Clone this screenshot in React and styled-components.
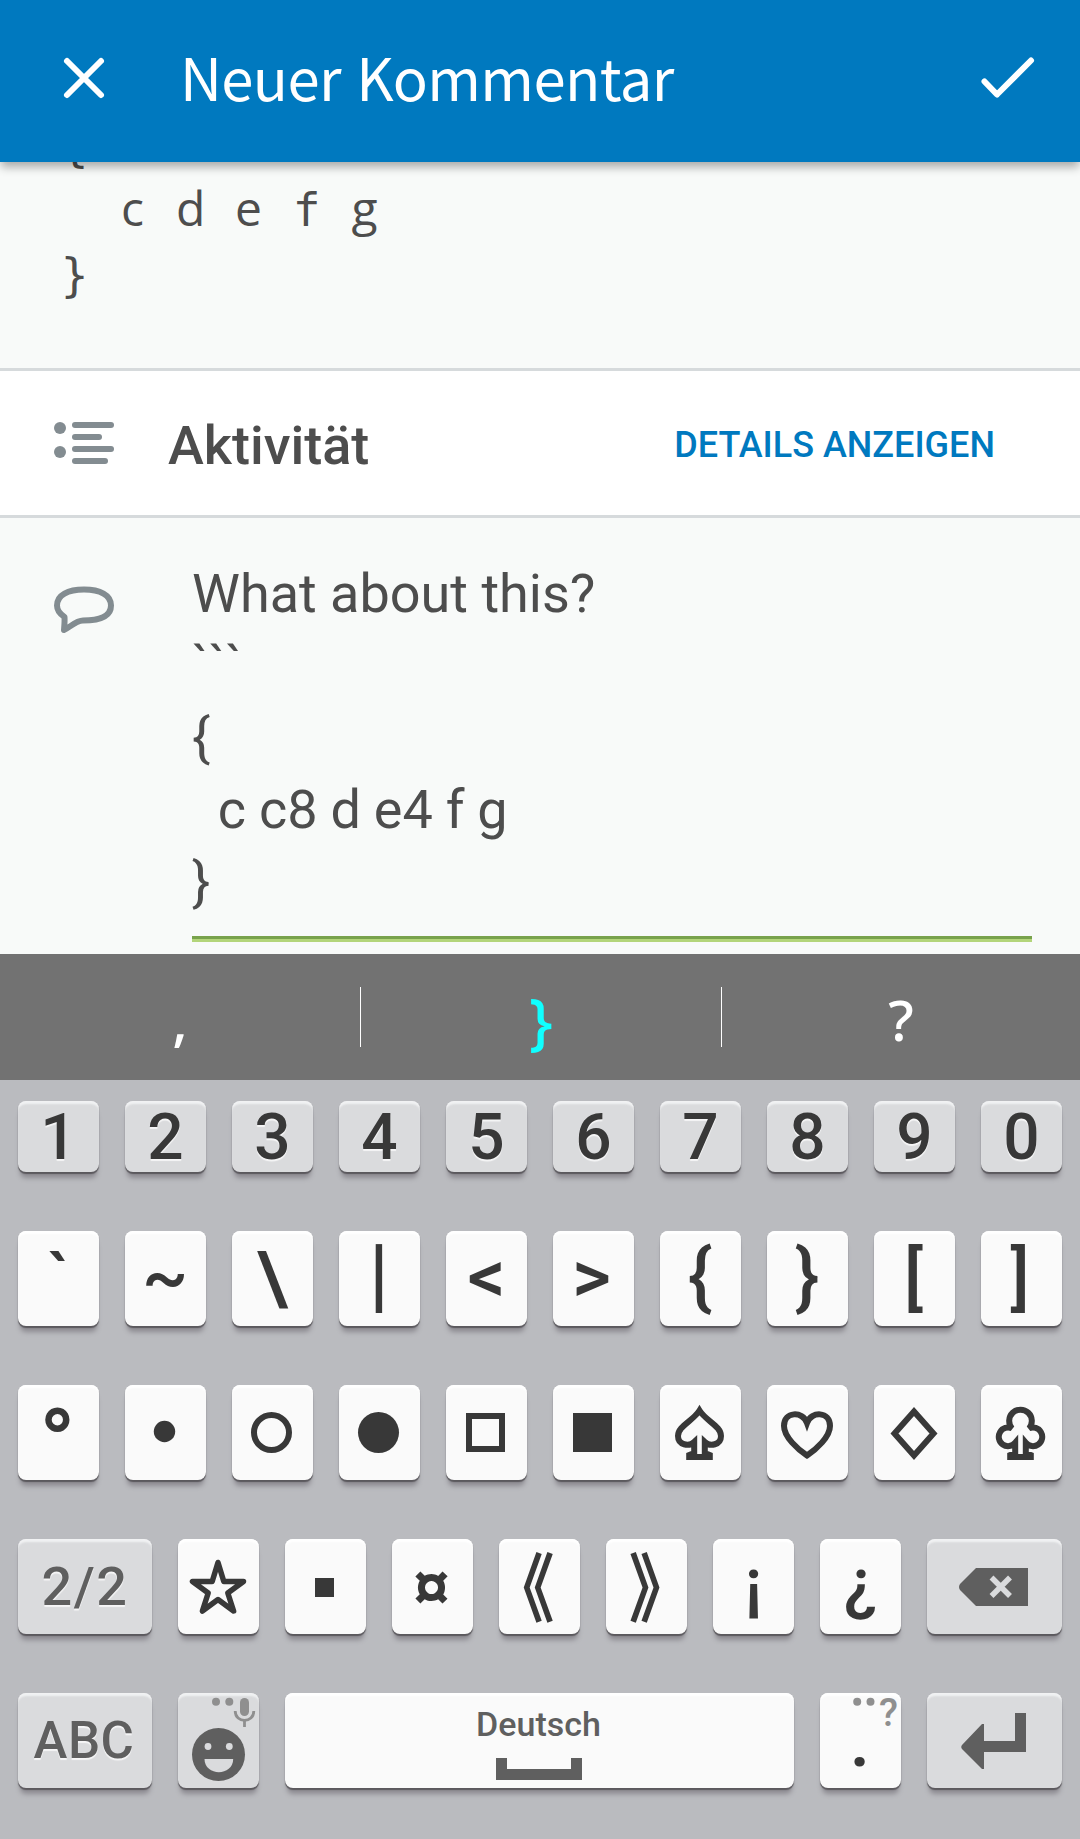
import React from 'react';
import styled, { createGlobalStyle, css } from 'styled-components';

const GlobalStyle = createGlobalStyle`
  * { box-sizing: border-box; }
  html, body { margin: 0; padding: 0; background: #babbbf; }
`;

const INK = '#383838';
const MUTED = '#5f5f5f';
const HINT = '#8f8f8f';

const Screen = styled.div`
  width: 1080px;
  height: 1839px;
  display: flex;
  flex-direction: column;
  overflow: hidden;
  background: #f8faf9;
  font-family: Roboto, "Liberation Sans", sans-serif;
  color: #4d4d4d;
`;

const Header = styled.header`
  flex: none;
  height: 162px;
  display: flex;
  align-items: center;
  padding: 0 42px 6px 60px;
  background: #0079bf;
  color: #fff;
  z-index: 1;
  box-shadow: 0 6px 9px -1px rgba(0, 0, 0, 0.32);
`;

const Title = styled.h1`
  flex: 1;
  margin: -5px 0 0 72px;
  font: 400 58px/80px "Noto Sans CJK JP", "Noto Sans", sans-serif;
  letter-spacing: -0.6px;
  word-spacing: 3px;
  white-space: nowrap;
`;

const CodeBlock = styled.section`
  flex: none;
  height: 206px;
  padding-left: 60px;
  overflow: hidden;
`;

const CodeLines = styled.div`
  margin-top: -52px;
`;

const CodeLine = styled.div`
  display: grid;
  grid-template-columns: repeat(12, 29px);
  height: 65px;
  font: 500 48px/65px "Open Sans", "Noto Sans", sans-serif;
  text-align: center;
`;

const MonoChar = styled.span`
  ${(p) => p.$mono && css`font: 400 46px/70px "DejaVu Sans Mono", monospace;`}
`;

const ActivityBar = styled.section`
  flex: none;
  height: 150px;
  display: flex;
  align-items: center;
  padding: 0 85px 0 54px;
  background: #fff;
  border: solid #d6dadc;
  border-width: 3px 0;
`;

const ActivityTitle = styled.h2`
  flex: 1;
  margin: 0 0 -5px 54px;
  font-size: 54px;
  line-height: 64px;
  font-weight: 500;
`;

const DetailsButton = styled.button`
  margin-top: 4px;
  padding: 0;
  border: 0;
  background: none;
  color: #0079bf;
  font: 500 36px/42px Roboto, sans-serif;
`;

const CommentSection = styled.section`
  flex: none;
  height: 436px;
  display: flex;
  align-items: flex-start;
  padding: 40px 48px 0 54px;
`;

const CommentGlyph = styled.div`
  flex: none;
  width: 138px;
  padding-top: 28px;
`;

const Editor = styled.div`
  flex: 1;
  height: 384px;
  border-bottom: 3px solid #b3d57a;
  box-shadow: inset 0 -3px 0 #78a24c;
  font-size: 54px;
  line-height: 72px;
`;

const EditorLine = styled.div`
  height: 72px;
  white-space: pre;
  word-spacing: ${(p) => (p.$tight ? -0.5 : 0)}px;
`;

const Suggestions = styled.div`
  flex: none;
  height: 126px;
  display: grid;
  grid-template-columns: 360px 361px 359px;
  align-items: center;
  background: #727272;
`;

const Suggestion = styled.div`
  height: 60px;
  display: flex;
  justify-content: center;
  align-items: center;
  font: 500 ${(p) => p.$size || 57}px/60px "Noto Sans", sans-serif;
  color: ${(p) => (p.$active ? '#10ffff' : '#fff')};
  border-left: ${(p) => (p.$first ? 0 : 1)}px solid #fff;
`;

const Word = styled.span`
  margin-top: 3px;
`;

const Keyboard = styled.div`
  flex: 1;
  display: flex;
  flex-direction: column;
  gap: 59px;
  padding: 21px 18px 0;
  background: #babbbf;
`;

const KeyRow = styled.div`
  flex: none;
  display: flex;
  gap: 26px;
`;

const Key = styled.div`
  position: relative;
  flex: ${(p) => (p.$grow ? '1 1 0' : 'none')};
  width: ${(p) => (p.$wide ? p.$wide : 81)}px;
  height: ${(p) => (p.$short ? 71 : 95)}px;
  display: flex;
  align-items: center;
  justify-content: center;
  border-radius: 8px;
  background: ${(p) => (p.$tone === 'grey' ? '#dadbdd' : '#fafafa')};
  color: ${(p) => (p.$muted ? MUTED : INK)};
  font-weight: 500;
  font-size: ${(p) => p.$size || 75}px;
  line-height: 1;
  white-space: nowrap;
  text-shadow: ${(p) => (p.$tone === 'grey' ? '0 2px 1px rgba(255,255,255,0.75)' : 'none')};
  box-shadow:
    inset 0 4px 2px -1px ${(p) => (p.$tone === 'grey' ? '#f1f2f3' : '#ffffff')},
    0 1.5px 1px rgba(85, 83, 88, 0.9),
    0 8px 5px -2px #8c8a90;
`;

const Label = styled.span`
  font-family: ${(p) => p.$family || 'Roboto, sans-serif'};
  font-size: ${(p) => (p.$size ? `${p.$size}px` : 'inherit')};
  font-weight: ${(p) => p.$weight || 500};
  letter-spacing: ${(p) => p.$track || 0}px;
  margin-left: ${(p) => p.$dx || 0}px;
  margin-top: ${(p) => p.$dy || 0}px;
  ${(p) => p.$squeeze && css`transform: scaleX(${p.$squeeze});`}
`;

const Drawing = styled.svg`
  display: block;
  flex: none;
`;

const SpaceBody = styled.div`
  display: flex;
  flex-direction: column;
  align-items: center;
  gap: 16px;
  padding: 5px 2px 0 0;
`;

const SpaceName = styled.span`
  font: 500 34px/36px Roboto, sans-serif;
`;

const Hint = styled.span`
  position: absolute;
  top: 3px;
  right: 3px;
  display: flex;
  gap: 4px;
  color: ${HINT};
  font: 500 39px/34px Roboto, sans-serif;
`;

const CloseIcon = () => (
  <Drawing width="48" height="48" viewBox="0 0 48 48" stroke="#fff" strokeWidth="6" strokeLinecap="round">
    <path d="M7 7L41 41M41 7L7 41" />
  </Drawing>
);

const CheckIcon = () => (
  <Drawing width="60" height="48" viewBox="0 0 60 48" fill="none" stroke="#fff" strokeWidth="6" strokeLinecap="round" strokeLinejoin="round">
    <path d="M6.500 27.500L19 40.500L53 6.500" />
  </Drawing>
);

const ListIcon = () => (
  <Drawing width="60" height="42" viewBox="0 0 60 42" fill="#838c91">
    <circle cx="6" cy="6" r="6" />
    <circle cx="6" cy="30" r="6" />
    <rect x="18" y="0" width="42" height="6" rx="3" />
    <rect x="18" y="12" width="30" height="6" rx="3" />
    <rect x="18" y="24" width="42" height="6" rx="3" />
    <rect x="18" y="36" width="36" height="6" rx="3" />
  </Drawing>
);

const CommentIcon = () => (
  <Drawing width="60" height="48" viewBox="0 0 60 48" fill="none" stroke="#838c91" strokeWidth="6" strokeLinejoin="round">
    <path d="M30 3.500C14 3.500 3 9 3 19.500C3 24 6 28 10.500 31C10.800 35 10.400 39 10 44C15 42 22 34.500 29 34.500C47 34.500 57 30 57 19.500C57 9 46 3.500 30 3.500Z" />
  </Drawing>
);

const KeyArt = ({ w = 81, label, children, color = INK }) => (
  <Drawing width={w} height="95" viewBox={`0 0 ${w} 95`} role="img" aria-label={label} fill="none" stroke={color} strokeWidth="6">
    {children}
  </Drawing>
);

const shapes = {
  '•': <circle cx="39.500" cy="46.500" r="10.700" fill={INK} stroke="none" />,
  '○': <circle cx="39.500" cy="47.500" r="17.500" />,
  '●': <circle cx="39.500" cy="47.500" r="20.500" fill={INK} stroke="none" />,
  '□': <rect x="23" y="31" width="33" height="33" />,
  '■': <rect x="20" y="28" width="39" height="39" fill={INK} stroke="none" />,
  '♤': (
    <path
      strokeWidth="6"
      d="M39.500 25.500C46 36 61 41 61 51C61 60 50 62 44.800 57V68L49.800 70V72H29.200V70L34.200 68V57C29 62 18 60 18 51C18 41 33 36 39.500 25.500Z"
    />
  ),
  '♡': <path d="M40 70.500C31 64.500 17 52 17 41C17 26.500 35.500 25.500 40 38C44.500 25.500 63 26.500 63 41C63 52 49 64.500 40 70.500Z" />,
  '◇': <path d="M40 26.500L59.500 48.500L40 70.500L20.500 48.500Z" />,
  '♧': (
    <path
      strokeWidth="6"
      d="M31 43.400A9.300 9.300 0 1 0 34.200 57.800V68L29.200 70V72H49.800V70L44.800 68V57.800A9.300 9.300 0 1 0 48 43.400A11.300 11.300 0 1 0 31 43.400Z"
    />
  ),
  '☆': <path strokeWidth="5.500" d="M40 23.500L45.800 42.500H65.500L49.800 54L55.600 72L40 60.500L24.400 72L30.200 54L14.500 42.500H34.200Z" strokeLinejoin="round" />,
  '▪': <rect x="30" y="39" width="19" height="19" fill={INK} stroke="none" />,
};

const cjk = '"Noto Sans CJK JP", sans-serif';
const digits = ['1', '2', '3', '4', '5', '6', '7', '8', '9', '0'];
const symbols = [
  { c: '`', size: 68 },
  { c: '~', size: 69, dx: -1, dy: -5 },
  { c: '\\', dx: -1 },
  { c: '|', size: 81.5, dx: -1, dy: -7.600 },
  { c: '<', dy: -4 },
  { c: '>', dx: -4, dy: -4 },
  { c: '{', size: 74, dx: -1, dy: -3 },
  { c: '}', size: 74, dx: -1, dy: -3 },
  { c: '[', size: 70.500, dx: -2 },
  { c: ']', size: 70.500, dx: -3 },
];
const marks = [
  { c: '°', size: 92, weight: 700, dx: -2, dy: 20 },
  { c: '•' },
  { c: '○' },
  { c: '●' },
  { c: '□' },
  { c: '■' },
  { c: '♤' },
  { c: '♡' },
  { c: '◇' },
  { c: '♧' },
];
const extras = [
  { c: '☆' },
  { c: '▪' },
  { c: '¤', family: '"Open Sans", sans-serif', size: 70, weight: 700, dx: -2, dy: -3 },
  { c: '《', family: cjk, weight: 700, dx: -34, dy: -6, squeeze: 0.85 },
  { c: '》', family: cjk, weight: 700, dx: 28, dy: -6, squeeze: 0.85 },
  { c: '¡', size: 68.500, dy: -7 },
  { c: '¿', size: 68.500, dy: -7 },
];

const Mark = ({ c, family, size, weight, dx, dy, squeeze }) =>
  shapes[c] ? (
    <KeyArt label={c}>{shapes[c]}</KeyArt>
  ) : (
    <Label $family={family} $size={size} $weight={weight} $dx={dx} $dy={dy} $squeeze={squeeze}>{c}</Label>
  );

const MarkKeys = ({ items }) =>
  items.map((m) => (
    <Key key={m.c}>
      <Mark {...m} />
    </Key>
  ));

const Code = ({ text }) => (
  <CodeLine>
    {[...text].map((ch, i) => (
      <MonoChar key={i} $mono={'f{}'.includes(ch)}>{ch}</MonoChar>
    ))}
  </CodeLine>
);

export default function App() {
  return (
    <Screen>
      <GlobalStyle />
      <Header>
        <CloseIcon />
        <Title>Neuer Kommentar</Title>
        <CheckIcon />
      </Header>

      <CodeBlock>
        <CodeLines>
          <Code text="{" />
          <Code text="  c d e f g" />
          <Code text="}" />
        </CodeLines>
      </CodeBlock>

      <ActivityBar>
        <ListIcon />
        <ActivityTitle>Aktivität</ActivityTitle>
        <DetailsButton>DETAILS ANZEIGEN</DetailsButton>
      </ActivityBar>

      <CommentSection>
        <CommentGlyph>
          <CommentIcon />
        </CommentGlyph>
        <Editor>
          <EditorLine>What about this?</EditorLine>
          <EditorLine>```</EditorLine>
          <EditorLine>{'{'}</EditorLine>
          <EditorLine $tight>{'  c c8 d e4 f g'}</EditorLine>
          <EditorLine>{'}'}</EditorLine>
        </Editor>
      </CommentSection>

      <Suggestions>
        <Suggestion $first>
          <Word>,</Word>
        </Suggestion>
        <Suggestion $active $size={62}>
          <Word>{'}'}</Word>
        </Suggestion>
        <Suggestion>
          <Word>?</Word>
        </Suggestion>
      </Suggestions>

      <Keyboard>
        <KeyRow>
          {digits.map((d) => (
            <Key key={d} $tone="grey" $short $size={64}>
              <Label $dy={2}>{d}</Label>
            </Key>
          ))}
        </KeyRow>
        <KeyRow>
          <MarkKeys items={symbols} />
        </KeyRow>
        <KeyRow>
          <MarkKeys items={marks} />
        </KeyRow>
        <KeyRow>
          <Key $tone="grey" $muted $wide={134} $size={54}>
            <Label $track={1.5}>2/2</Label>
          </Key>
          <MarkKeys items={extras} />
          <Key $tone="grey" $wide={135}>
            <KeyArt w={135} label="Löschen" color="#dadbdd">
              <path d="M49 29H101V67H49L33 51Q31 48 33 45Z" fill={MUTED} stroke="none" />
              <path d="M64.500 38.500L83 57M83 38.500L64.500 57" strokeWidth="5.500" />
            </KeyArt>
          </Key>
        </KeyRow>
        <KeyRow>
          <Key $tone="grey" $muted $wide={134} $size={51}>
            <Label $track={0.5} $dx={-2}>ABC</Label>
          </Key>
          <Key $tone="grey">
            <KeyArt label="Emoji">
              <g fill={HINT} stroke="none">
                <circle cx="38" cy="8.700" r="4" />
                <circle cx="51.300" cy="8.700" r="4" />
                <rect x="62" y="5" width="9" height="18" rx="4.500" />
              </g>
              <path d="M57.200 18C57.200 30.500 75.800 30.500 75.800 18M66.500 28V34" stroke={HINT} strokeWidth="2.800" />
              <circle cx="40.500" cy="61.500" r="26.500" fill={MUTED} stroke="none" />
              <g fill="#dadbdd" stroke="none">
                <circle cx="30" cy="53.500" r="3.400" />
                <circle cx="51.300" cy="53.500" r="3.400" />
                <path d="M26.500 66H55.200C55.200 83.500 26.500 83.500 26.500 66Z" />
              </g>
            </KeyArt>
          </Key>
          <Key $grow $muted>
            <SpaceBody>
              <SpaceName>Deutsch</SpaceName>
              <Drawing width="86" height="22" viewBox="0 0 86 22" fill={MUTED}>
                <path d="M0 0H11V11H75V0H86V22H0Z" />
              </Drawing>
            </SpaceBody>
          </Key>
          <Key>
            <Label $dx={-1}>.</Label>
            <Hint>
              <Drawing width="22" height="12" viewBox="0 0 22 12" fill={HINT}>
                <circle cx="4.200" cy="5.700" r="4" />
                <circle cx="17.500" cy="5.700" r="4" />
              </Drawing>
              ?
            </Hint>
          </Key>
          <Key $tone="grey" $wide={135}>
            <KeyArt w={135} label="Eingabe">
              <path d="M88 20H99V59H57V76H55L35 56Q33.500 54 35 52L55 31H57V48H88Z" fill={MUTED} stroke="none" />
            </KeyArt>
          </Key>
        </KeyRow>
      </Keyboard>
    </Screen>
  );
}
